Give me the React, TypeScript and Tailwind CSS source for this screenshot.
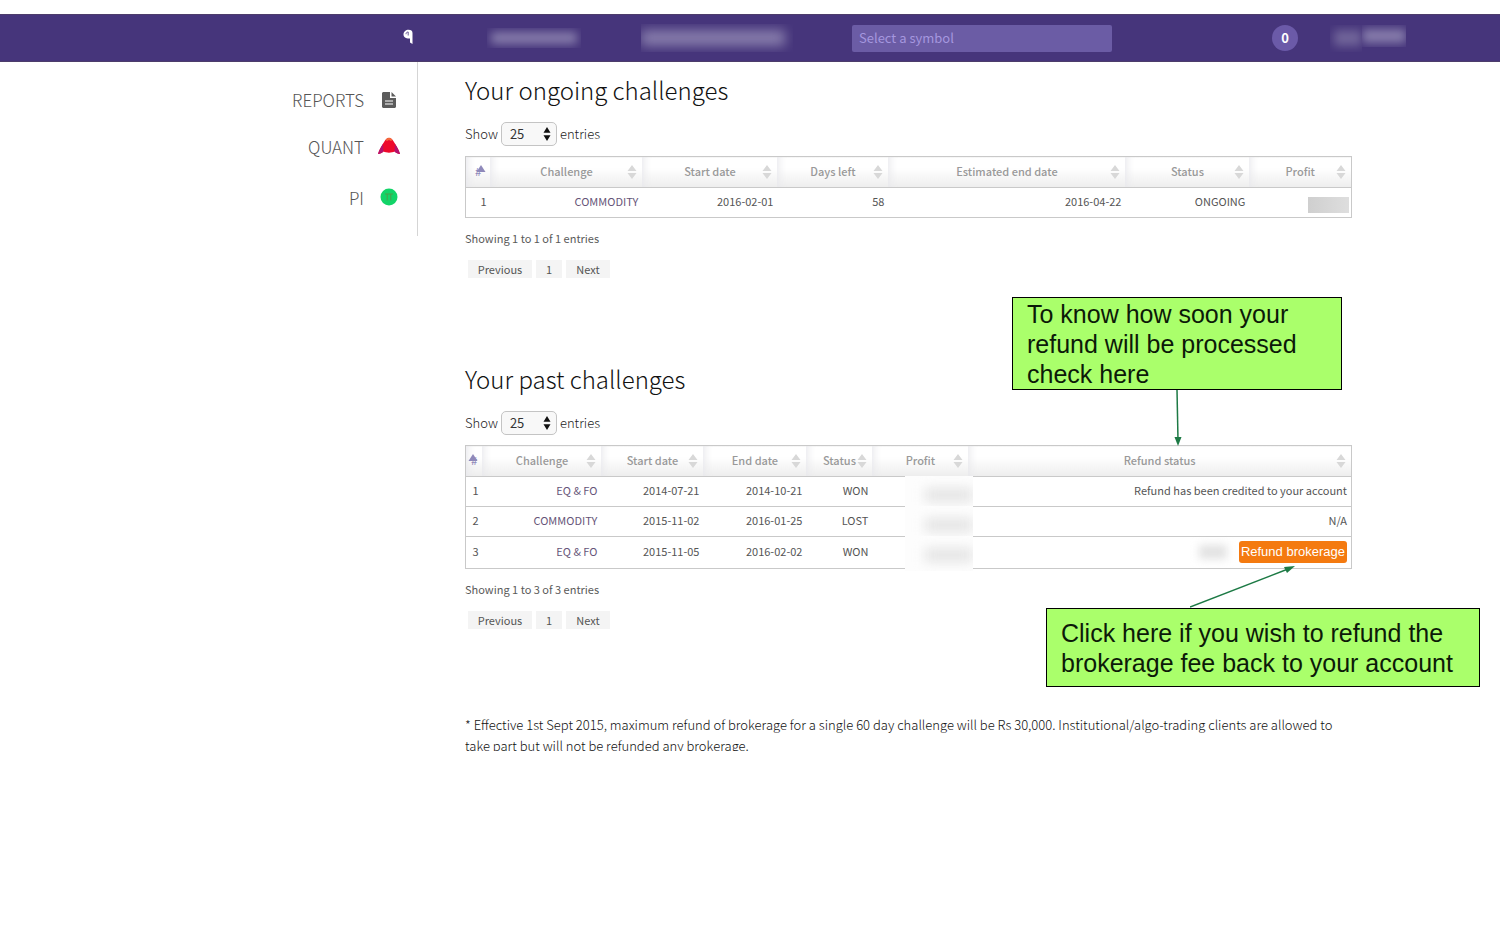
import type { ReactNode } from "react";

type Column = { label: string; width: number; sorted?: boolean };

const ongoingColumns: Column[] = [
  { label: "#", width: 25, sorted: true },
  { label: "Challenge", width: 152 },
  { label: "Start date", width: 135 },
  { label: "Days left", width: 111 },
  { label: "Estimated end date", width: 237 },
  { label: "Status", width: 124 },
  { label: "Profit", width: 102 },
];

const pastColumns: Column[] = [
  { label: "#", width: 17, sorted: true },
  { label: "Challenge", width: 119 },
  { label: "Start date", width: 102 },
  { label: "End date", width: 103 },
  { label: "Status", width: 66 },
  { label: "Profit", width: 96 },
  { label: "Refund status", width: 383 },
];

const pastRows = [
  ["1", "EQ & FO", "2014-07-21", "2014-10-21", "WON"],
  ["2", "COMMODITY", "2015-11-02", "2016-01-25", "LOST"],
  ["3", "EQ & FO", "2015-11-05", "2016-02-02", "WON"],
];

function SortArrows() {
  return (
    <svg viewBox="0 0 10 16" className="absolute right-[5px] top-[7px] h-4 w-[10px]" aria-hidden="true">
      <path d="M5 1 9.500 7h-9zM5 15 .5 9h9z" fill="#d8d8d8" />
    </svg>
  );
}

function SortedArrow() {
  return (
    <svg viewBox="0 0 10 8" className="absolute right-1 top-[8px] h-2 w-[10px]" aria-hidden="true">
      <path d="M5 0 9.500 7h-9z" fill="#8f89ba" />
    </svg>
  );
}

function DataTable({ columns, label, children }: { columns: Column[]; label: string; children: ReactNode }) {
  return (
    <table aria-label={label} className="mt-[10px] w-full table-fixed border-collapse border border-[#c9c9c9] text-[11px] font-normal leading-4">
      <colgroup>
        {columns.map((c) => (
          <col key={c.label} style={{ width: `${(c.width / 886) * 100}%` }} />
        ))}
      </colgroup>
      <thead>
        <tr className="h-[31px] border-b border-[#c9c9c9]">
          {columns.map((c) => (
            <th
              key={c.label}
              scope="col"
              className="relative bg-linear-to-b from-white from-35% to-[#ededed] px-0 pb-[2px] pt-0 text-center font-medium text-[#999] shadow-[inset_10px_0_8px_-8px_#e8e8ec]"
            >
              {c.sorted ? <span className="text-[#8f89ba]">#</span> : c.label}
              {c.sorted ? <SortedArrow /> : <SortArrows />}
            </th>
          ))}
        </tr>
      </thead>
      <tbody>{children}</tbody>
    </table>
  );
}

function Cell({ children, link }: { children?: ReactNode; link?: boolean }) {
  return (
    <td className="whitespace-nowrap pb-[3px] pl-0 pr-[4px] pt-0 text-right text-[#555]">
      {link ? <a href="#challenge" className="text-[#665478]">{children}</a> : children}
    </td>
  );
}

function PageLength({ id }: { id: string }) {
  return (
    <div className="mt-4 flex h-6 items-center gap-[3px] text-[13px] text-[#222]">
      <label htmlFor={id} className="pb-px">Show</label>
      <div className="relative">
        <select
          id={id}
          defaultValue="25"
          className="block h-6 w-14 appearance-none rounded-[5px] border border-[#c4c4c4] bg-[#f8f8f8] pb-px pl-2 text-[13px] font-normal leading-5 text-[#333]"
        >
          <option>10</option>
          <option>25</option>
          <option>50</option>
        </select>
        <svg viewBox="0 0 8 14" className="pointer-events-none absolute right-[6px] top-[5px] h-[14px] w-2" aria-hidden="true">
          <path d="M4 0 7.500 5.800h-7zM4 14 .5 8.200h7z" fill="#111" />
        </svg>
      </div>
      <span className="pb-px">entries</span>
    </div>
  );
}

function TableFooter({ text }: { text: string }) {
  return (
    <>
      <p className="mt-[10px] text-[11px] font-normal leading-5 text-[#5a5a5a]">{text}</p>
      <nav aria-label="Pagination" className="ml-[3px] mt-3 flex gap-1 text-[11px] font-normal leading-[18px] text-[#555]">
        <button type="button" className="w-16 bg-[#f4f4f4]">Previous</button>
        <button type="button" className="w-[26px] bg-[#f4f4f4]">1</button>
        <button type="button" className="w-[44px] bg-[#f4f4f4]">Next</button>
      </nav>
    </>
  );
}

function Header() {
  return (
    <header className="mt-[14px] flex h-12 items-center border-b border-t border-[#4d3d6b] bg-[#46357b]">
      <a href="#home" aria-label="Home" className="ml-[403px]">
        <svg viewBox="0 0 11 16" className="mb-[2px] h-4 w-[11px]" aria-hidden="true">
          <path d="M.5 5.500C.5 2.500 3 .8 5.500.8c2.500 0 4 1.200 4 3.200v11L7 13.500V9.500C3.500 9.800.5 8.500.5 5.500z" fill="#fff" />
          <path d="M3 5.200c0-1.500 1-2.200 2.200-2.200v3.500" fill="none" stroke="#46357b" strokeWidth=".8" />
        </svg>
      </a>
      <span className="ml-[73px] flex h-5 w-[94px] items-center overflow-hidden" aria-hidden="true">
        <span className="mx-1 h-3 grow bg-[#a29bc0]/70 blur-[5px]" />
      </span>
      <span className="ml-[60px] flex h-7 w-[152px] items-center overflow-hidden" aria-hidden="true">
        <span className="mr-2 h-4 grow bg-[#a29bc0]/70 blur-[6px]" />
      </span>
      <input
        type="text"
        aria-label="Select a symbol"
        placeholder="Select a symbol"
        className="ml-[59px] h-[27px] w-[260px] rounded-[2px] bg-[#6b5ca5] px-[7px] pb-px text-[13px] font-normal text-white placeholder:text-[#a597df]"
      />
      <button type="button" aria-label="0 notifications" className="ml-40 size-[26px] rounded-full bg-[#6b5aa8] text-[13px] font-bold leading-[26px] text-white">
        0
      </button>
      <span className="ml-8 flex items-start" aria-hidden="true">
        <span className="flex h-[27px] w-8 items-center overflow-hidden">
          <span className="ml-1 h-4 grow bg-[#8c84ae]/60 blur-[5px]" />
        </span>
        <span className="flex h-[22px] w-11 items-center overflow-hidden">
          <span className="h-[14px] grow bg-[#a29bc0]/70 blur-[5px]" />
        </span>
      </span>
    </header>
  );
}

function Sidebar() {
  return (
    <aside className="h-[174px] w-[418px] shrink-0 border-r border-[#d5d5d5] pr-[17px] text-[17px] leading-6 text-[#555]">
      <nav aria-label="Products" className="flex flex-col items-end">
        <a href="#reports" className="mt-[26px] flex items-center gap-[14px]">
          REPORTS
          <span className="flex w-[22px] justify-center">
            <svg viewBox="0 0 14 16" className="h-4 w-[14px]" aria-hidden="true">
              <path d="M1 0h7v6h6v9l-1 1H1l-1-1V1z" fill="#5c5c5c" />
              <path d="M9.500 0 14 4.500H9.500z" fill="#5c5c5c" />
              <path d="M3 9h8M3 12h8" stroke="#fff" strokeWidth="1.200" />
            </svg>
          </span>
        </a>
        <a href="#quant" className="mt-[23px] flex items-center gap-[14px]">
          QUANT
          <svg viewBox="0 0 22 18" className="mb-[2px] h-[18px] w-[22px]" aria-hidden="true">
            <path d="M0 17C1 13 4 8 7 3.500 8.500 1.500 9.500 1 11 1s2.500.5 4 2.500C18 8 21 13 22 17c-2 0-4-1-5.500-2.500C14 16 8 16 5.500 14.500 4 16 2 17 0 17z" fill="#ee0a2c" />
            <path d="M0 17C1 13 3 10 5 7l.5 7.500C4 16 2 17 0 17zM22 17c-1-4-3-7-5-10l-.5 7.500C18 16 20 17 22 17z" fill="#b3126e" />
            <path d="M7.500 3C9 1 10 .8 11 .8S13 1 14.500 3L13 4l-2-1-2 1z" fill="#f4683c" />
          </svg>
        </a>
        <a href="#pi" className="mt-[27px] flex items-center gap-[14px]">
          PI
          <span className="flex w-[22px] justify-center">
            <svg viewBox="0 0 18 18" className="mb-[3px] size-[18px]" aria-hidden="true">
              <circle cx="9" cy="9" r="8.500" fill="#12d468" />
              <path d="M5 6h8M7.200 6v6.500M10.800 6v6.500" stroke="#4d9e4a" fill="none" />
            </svg>
          </span>
        </a>
      </nav>
    </aside>
  );
}

export default function App() {
  return (
    <div className="min-h-screen overflow-x-hidden bg-white font-['Noto_Sans_CJK_SC','Noto_Sans',sans-serif] font-light">
      <Header />
      <div className="flex">
        <Sidebar />
        <main className="relative ml-[47px] mr-[148px] max-w-[887px] grow">
          <section>
            <h1 className="pt-3 text-[24px] leading-8 text-[#111]">Your ongoing challenges</h1>
            <PageLength id="ongoing-length" />
            <DataTable columns={ongoingColumns} label="Ongoing challenges">
              <tr className="h-[30px]">
                <Cell>1</Cell>
                <Cell link>COMMODITY</Cell>
                <Cell>2016-02-01</Cell>
                <Cell>58</Cell>
                <Cell>2016-04-22</Cell>
                <Cell>ONGOING</Cell>
                <td className="pr-[2px]">
                  <span className="ml-auto mt-1 block h-4 w-[41px] bg-linear-to-r from-[#cfcfcf] to-[#dedede]" aria-hidden="true" />
                </td>
              </tr>
            </DataTable>
            <TableFooter text="Showing 1 to 1 of 1 entries" />
          </section>

          <section className="mt-[73px]">
            <h2 className="pt-3 text-[24px] leading-8 text-[#111]">Your past challenges</h2>
            <PageLength id="past-length" />
            <DataTable columns={pastColumns} label="Past challenges">
              {pastRows.map((row, i) => (
                <tr key={row[0]} className="h-[30px] border-b border-[#c9c9c9] last:h-8">
                  {row.map((value, j) => (
                    <Cell key={j} link={j === 1}>{value}</Cell>
                  ))}
                  <td className="relative p-0">
                    <span className="absolute -right-[5px] -top-px h-[35px] w-[68px] overflow-hidden bg-[#fdfdfd]" aria-hidden="true">
                      <span className="ml-5 mt-3 block h-[14px] w-12 bg-[#dadada]/70 blur-[6px]" />
                    </span>
                  </td>
                  <Cell>
                    {i === 0 && "Refund has been credited to your account"}
                    {i === 1 && "N/A"}
                    {i === 2 && (
                      <span className="mt-[2px] flex items-center justify-end gap-[12px]">
                        <span className="h-[14px] w-7 bg-[#cfcfcf]/60 blur-[4px]" aria-hidden="true" />
                        <button
                          type="button"
                          className="h-[22px] w-[108px] rounded-[3px] bg-[#f47a10] font-['Liberation_Sans',sans-serif] text-[13px] font-normal text-white"
                        >
                          Refund brokerage
                        </button>
                      </span>
                    )}
                  </Cell>
                </tr>
              ))}
            </DataTable>
            <TableFooter text="Showing 1 to 3 of 3 entries" />
          </section>

          <p className="mt-[85px] h-[37px] overflow-hidden text-[13px] leading-[21px] text-[#111]">
            * Effective 1st Sept 2015, maximum refund of brokerage for a single 60 day challenge will be Rs 30,000. Institutional/algo-trading clients are allowed to take part but will not be refunded any brokerage.
          </p>

          <div className="absolute left-[547px] top-[235px] w-[330px] border border-black bg-[#aaff6b] pl-[14px] pt-px font-['Liberation_Sans',sans-serif] text-[25px] font-normal leading-[30px] text-[#0c1a08]">
            To know how soon your refund will be processed check here
          </div>
          <svg viewBox="0 0 10 56" className="absolute left-[708px] top-[328px] h-[56px] w-[10px]" aria-hidden="true">
            <path d="M4 0 5 50" stroke="#1d7a45" strokeWidth="1.500" />
            <path d="M1.500 47h7L5 56z" fill="#1d7a45" />
          </svg>

          <div className="absolute left-[581px] top-[546px] w-[434px] border border-black bg-[#aaff6b] pb-2 pl-[14px] pt-[9px] font-['Liberation_Sans',sans-serif] text-[25px] font-normal leading-[30px] text-[#0c1a08]">
            Click here if you wish to refund the brokerage fee back to your account
          </div>
          <svg viewBox="0 0 106 43" className="absolute left-[725px] top-[503px] h-[43px] w-[106px]" aria-hidden="true">
            <path d="M0 42 98 4" stroke="#1d7a45" strokeWidth="1.500" />
            <path d="M105 1 97 8 94 2z" fill="#1d7a45" />
          </svg>
        </main>
      </div>
    </div>
  );
}
